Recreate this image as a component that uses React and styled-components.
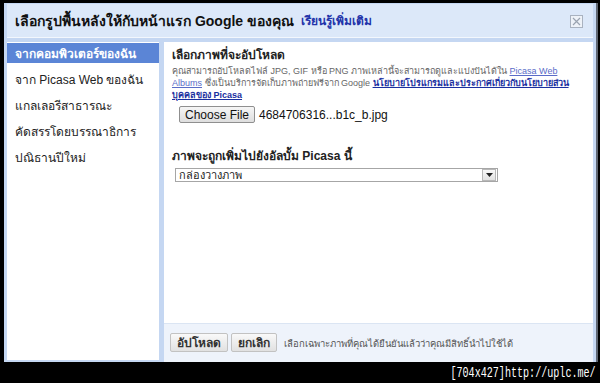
import React from "react";
import styled, { createGlobalStyle } from "styled-components";

const GlobalStyle = createGlobalStyle`
  html, body {
    margin: 0;
    padding: 0;
    background: #000;
    width: 600px;
    height: 383px;
    overflow: hidden;
  }
  body {
    font-family: Tahoma, "Liberation Sans", "Noto Sans", sans-serif;
  }
`;

const Screen = styled.div`
  width: 600px;
  height: 383px;
  box-sizing: border-box;
  padding: 3px 4px 0 4px;
  display: flex;
  flex-direction: column;
`;

const Dialog = styled.div`
  width: 592px;
  height: 359px;
  box-sizing: border-box;
  background: #c5d7f2;
  padding: 1px 3px 2px 3px;
  display: flex;
  flex-direction: column;
  box-shadow: 2px 0 0 #5f6672;
`;

const Header = styled.div`
  height: 33px;
  flex-shrink: 0;
  background: #dce8f9;
  border-bottom: 1px solid #f3f7fd;
  margin-bottom: 4px;
  display: flex;
  align-items: center;
  padding: 0 10px 0 8px;
  gap: 7px;
`;

const Title = styled.div`
  font-size: 14px;
  font-weight: bold;
  color: #111;
`;

const HeaderLink = styled.a`
  font-size: 12px;
  font-weight: bold;
  color: #2233aa;
  text-decoration: none;
  flex: 1;
`;

const CloseBox = styled.div`
  width: 11px;
  height: 11px;
  border: 1px solid #a9b2c0;
  background: #eef2f8;
  display: flex;
  align-items: center;
  justify-content: center;
  margin-top: 2px;
`;

const Body = styled.div`
  flex: 1;
  display: flex;
  gap: 5px;
  min-height: 0;
`;

const Sidebar = styled.div`
  width: 152px;
  flex-shrink: 0;
  background: #fff;
  padding-top: 1px;
  display: flex;
  flex-direction: column;
  gap: 6px;
`;

const NavItem = styled.div`
  height: 20px;
  display: flex;
  align-items: center;
  padding-left: 8px;
  font-size: 12px;
  color: ${(p) => (p.$active ? "#fff" : "#222")};
  background: ${(p) => (p.$active ? "#5b85d6" : "transparent")};
  font-weight: ${(p) => (p.$active ? "bold" : "normal")};
`;

const Content = styled.div`
  flex: 1;
  background: #fff;
  display: flex;
  flex-direction: column;
  margin-bottom: -2px;
`;

const Main = styled.div`
  flex: 1;
  padding: 6px 8px 0 8px;
`;

const SectionTitle = styled.div`
  font-size: 12px;
  font-weight: bold;
  color: #222;
  line-height: 14px;
`;

const Description = styled.div`
  margin-top: 3px;
  font-size: 9px;
  line-height: 12px;
  color: #666;
  white-space: nowrap;
`;

const TextLink = styled.a`
  color: ${(p) => (p.$strong ? "#1a2fa0" : "#5a6cc8")};
  font-weight: ${(p) => (p.$strong ? "bold" : "normal")};
  text-decoration: underline;
`;

const FileRow = styled.div`
  margin: 5px 0 0 7px;
  display: flex;
  align-items: center;
  gap: 4px;
`;

const FileButton = styled.div`
  width: 74px;
  height: 15px;
  border: 1px solid #8f8f8f;
  border-radius: 2px;
  background: linear-gradient(#f6f6f6, #dedede);
  font-family: "Liberation Sans", Arial, sans-serif;
  font-size: 12px;
  color: #111;
  display: flex;
  align-items: center;
  justify-content: center;
`;

const FileName = styled.span`
  font-family: "Liberation Sans", Arial, sans-serif;
  font-size: 12px;
  color: #111;
`;

const AlbumTitle = styled(SectionTitle)`
  margin-top: 26px;
`;

const SelectBox = styled.div`
  margin: 5px 0 0 3px;
  width: 318px;
  height: 12px;
  border: 1px solid #a6a6a6;
  display: flex;
  align-items: center;
  justify-content: space-between;
  font-size: 11px;
  color: #222;
  padding-left: 3px;
`;

const SelectArrow = styled.div`
  width: 12px;
  height: 10px;
  margin-right: 1px;
  border: 1px solid #b8b8b8;
  background: linear-gradient(#f8f8f8, #e2e2e2);
  display: flex;
  align-items: center;
  justify-content: center;
`;

const Footer = styled.div`
  height: 38px;
  flex-shrink: 0;
  background: #eef3fb;
  border-top: 1px solid #dbe5f3;
  display: flex;
  align-items: center;
  padding-left: 6px;
  gap: 3px;
`;

const ActionButton = styled.div`
  height: 17px;
  padding: 0 6px;
  border: 1px solid #c2c2c2;
  border-radius: 2px;
  background: linear-gradient(#f9f9f9, #e1e1e1);
  font-size: 12px;
  font-weight: bold;
  color: #333;
  display: flex;
  align-items: center;
  margin-top: -1px;
`;

const FooterNote = styled.span`
  margin-left: 4px;
  font-size: 9.5px;
  color: #555;
`;

const Watermark = styled.div`
  flex: 1;
  display: flex;
  justify-content: flex-end;
  align-items: center;
`;

const WatermarkText = styled.span`
  font-family: "Liberation Mono", "DejaVu Sans Mono", monospace;
  font-size: 14px;
  color: #fff;
  transform: scaleX(0.72);
  transform-origin: right center;
  white-space: nowrap;
`;

const navItems = [
  "จากคอมพิวเตอร์ของฉัน",
  "จาก Picasa Web ของฉัน",
  "แกลเลอรีสาธารณะ",
  "คัดสรรโดยบรรณาธิการ",
  "ปณิธานปีใหม่",
];

const App = () => {
  return (
    <>
      <GlobalStyle />
      <Screen>
        <Dialog>
          <Header>
            <Title>เลือกรูปพื้นหลังให้กับหน้าแรก Google ของคุณ</Title>
            <HeaderLink href="#">เรียนรู้เพิ่มเติม</HeaderLink>
            <CloseBox>
              <svg width="9" height="9" viewBox="0 0 9 9">
                <path d="M1 1L8 8M8 1L1 8" stroke="#9aa3b0" strokeWidth="1.2" />
              </svg>
            </CloseBox>
          </Header>
          <Body>
            <Sidebar>
              {navItems.map((item, i) => (
                <NavItem key={item} $active={i === 0}>
                  {item}
                </NavItem>
              ))}
            </Sidebar>
            <Content>
              <Main>
                <SectionTitle>เลือกภาพที่จะอัปโหลด</SectionTitle>
                <Description>
                  คุณสามารถอัปโหลดไฟล์ JPG, GIF หรือ PNG ภาพเหล่านี้จะสามารถดูและแบ่งปันได้ใน{" "}
                  <TextLink href="#">Picasa Web</TextLink>
                  <br />
                  <TextLink href="#">Albums</TextLink> ซึ่งเป็นบริการจัดเก็บภาพถ่ายฟรีจาก Google{" "}
                  <TextLink href="#" $strong>
                    นโยบายโปรแกรมและประกาศเกี่ยวกับนโยบายส่วน
                  </TextLink>
                  <br />
                  <TextLink href="#" $strong>
                    บุคคลของ Picasa
                  </TextLink>
                </Description>
                <FileRow>
                  <FileButton>Choose File</FileButton>
                  <FileName>4684706316...b1c_b.jpg</FileName>
                </FileRow>
                <AlbumTitle>ภาพจะถูกเพิ่มไปยังอัลบั้ม Picasa นี้</AlbumTitle>
                <SelectBox>
                  กล่องวางภาพ
                  <SelectArrow>
                    <svg width="7" height="4" viewBox="0 0 7 4">
                      <path d="M0 0H7L3.5 4Z" fill="#222" />
                    </svg>
                  </SelectArrow>
                </SelectBox>
              </Main>
              <Footer>
                <ActionButton>อัปโหลด</ActionButton>
                <ActionButton>ยกเลิก</ActionButton>
                <FooterNote>
                  เลือกเฉพาะภาพที่คุณได้ยืนยันแล้วว่าคุณมีสิทธิ์นำไปใช้ได้
                </FooterNote>
              </Footer>
            </Content>
          </Body>
        </Dialog>
        <Watermark>
          <WatermarkText>[704x427]http://uplc.me/</WatermarkText>
        </Watermark>
      </Screen>
    </>
  );
};

export default App;
